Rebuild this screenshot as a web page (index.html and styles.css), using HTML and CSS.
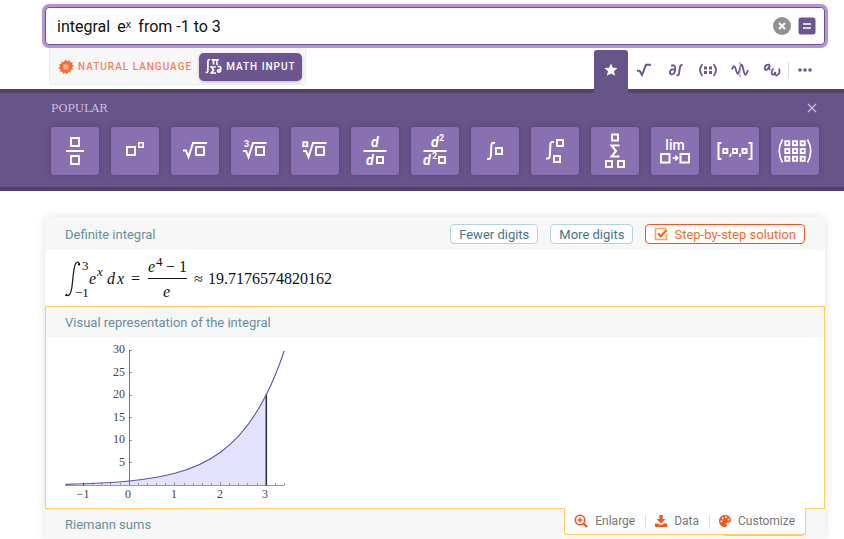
FILE: index.html
```html
<!DOCTYPE html>
<html lang="en">
<head>
<meta charset="utf-8">
<meta name="viewport" content="width=device-width, initial-scale=1">
<title>integral e^x from -1 to 3</title>
<link rel="stylesheet" href="styles.css">
</head>
<body>
<form class="query">
  <input class="query-input" type="text" aria-label="Query" value="integral&thinsp; eˣ&thinsp; from -1 to 3">
  <button class="query-btn" type="reset" aria-label="Clear">
    <svg width="18" height="18" viewBox="0 0 18 18"><circle cx="9" cy="9" r="9" fill="#919191"/><path d="M6 6l6 6M12 6l-6 6" stroke="#fff" stroke-width="2"/></svg>
  </button>
  <button class="query-btn" type="submit" aria-label="Compute">
    <svg width="18" height="18" viewBox="0 0 18 18"><rect x=".5" y=".5" width="17" height="17" rx="2.5" fill="#6b568f"/><path d="M5 7h8M5 11h8" stroke="#fff" stroke-width="1.6"/></svg>
  </button>
</form>

<div class="modes">
  <div class="toggle">
    <button class="mode natural" type="button">
      <svg width="16" height="16" viewBox="0 0 16 16"><path fill="#f96932" d="M8 .5l1.400 2.100L11.600.9l.5 2.500 2.700-.2-.7 2.400 1.900 1.400-2 1.300 1.200 2.200-2.500.4.1 2.500-2.400-.8L8.900 15.500 7.200 13.600 5.100 15l-.7-2.400-2.500.3.7-2.400L.3 9.200 2.200 7.600.9 5.500l2.500-.4-.2-2.500 2.400.7z"/><rect x="5.300" y="5.300" width="5.400" height="5.400" fill="#fba98a"/></svg>
      <span>NATURAL LANGUAGE</span>
    </button>
    <button class="mode math" type="button">
      <svg width="17" height="17" viewBox="0 0 17 17" fill="none" stroke="#fff" stroke-width="1.700"><path d="M5 1.800C3.300 1.200 2.900 2 2.900 4v8c0 2-.7 2.800-2.200 2.100M6.500 1.800h7.200M8.500 2v4.600M11.800 2v3.600q0 1 1.200.7M10.800 9H6.300l2.300 3-2.300 3h4.700M12.800 8.900q2.700-1.500 3 1.500.2 3.700-1.900 3.700-1.400 0-1.300-1.500.5-1.500 3-.9"/></svg>
      <span>MATH INPUT</span>
    </button>
  </div>
  <nav class="tabs" aria-label="Math keyboards">
    <button class="tab active" type="button" aria-label="Popular"><svg width="14" height="14" viewBox="0 0 14 14"><path fill="#fff" d="M7 .5l1.900 4.200 4.600.4-3.500 3.100 1.100 4.600L7 10.400l-4.100 2.400L4 8.200.5 5.100l4.600-.4z"/></svg></button>
    <button class="tab" type="button" aria-label="Roots"><svg width="16" height="16" viewBox="0 0 16 16"><path d="M1 8.800h2.600L6 13l4-10.200h5" stroke-width="2"/></svg></button>
    <button class="tab" type="button" aria-label="Calculus"><svg width="16" height="16" viewBox="0 0 16 16"><path d="M3.200 3.800Q7.400 2 7.300 7 6.800 12.500 3.500 12.400 1.500 12.200 2 9.500 3 6.200 7 8M14.500 3.400Q12.500 2.300 12 5l-1 6.500Q10.500 14 8.600 13" stroke-width="1.900"/></svg></button>
    <button class="tab" type="button" aria-label="Matrices"><svg width="20" height="16" viewBox="0 0 20 16"><path d="M4.400 2Q-.4 8 4.400 14M15.600 2Q20.400 8 15.600 14" stroke-width="1.800"/><path d="M6 6h3M11 6h3M6 10.500h3M11 10.500h3" stroke-width="3"/></svg></button>
    <button class="tab" type="button" aria-label="Functions"><svg width="18" height="18" viewBox="0 0 18 18"><path d="M1 8.500C3 3 4 5 5 9s2 6 3.500 0 2.200-8 3.700-1 2.400 8 4.800 1" stroke-width="1.800"/><path d="M9 1v16" stroke="#a99bc0" stroke-width="1.200" stroke-dasharray="3 1"/></svg></button>
    <button class="tab" type="button" aria-label="Greek letters"><svg width="18" height="16" viewBox="0 0 18 16"><path d="M6.800 2.800Q3 1.800 1.900 5q-.7 3 1.200 3Q5.500 7.600 6.800 2.800 5.500 7.700 7.400 7.900M10.500 6.500Q8 9.500 8.900 12q1.600 2.200 3.500-2.200-.7 4.200 1.800 3.500Q17.600 11.600 16 6.600" stroke-width="1.800"/></svg></button>
    <button class="tab more" type="button" aria-label="More"><svg width="16" height="6" viewBox="0 0 16 6"><g fill="#6b568f" stroke="none"><circle cx="3" cy="3" r="1.800"/><circle cx="8" cy="3" r="1.800"/><circle cx="13" cy="3" r="1.800"/></g></svg></button>
  </nav>
</div>

<section class="keyboard">
  <div class="keyboard-head">
    <h2>POPULAR</h2>
    <button class="close" type="button" aria-label="Close"><svg width="10" height="10" viewBox="0 0 10 10"><path d="M1 1l8 8M9 1L1 9" stroke="#cfc5df" stroke-width="1.100"/></svg></button>
  </div>
  <div class="keys">
    <button class="key" type="button" aria-label="Fraction"><svg viewBox="0 0 48 48"><path d="M20 11h8v8h-8zM20 29h8v8h-8zM15 24h18"/></svg></button>
    <button class="key" type="button" aria-label="Power"><svg viewBox="0 0 48 48"><path d="M16 20h8v8h-8z"/><path class="thin" d="M27.800 15.800h4.400v4.400h-4.400z"/></svg></button>
    <button class="key" type="button" aria-label="Square root"><svg viewBox="0 0 48 48"><path d="M12 23.500h3l2.500 6.500L22 16h14M25 20h8v8h-8z"/></svg></button>
    <button class="key" type="button" aria-label="Cube root"><svg viewBox="0 0 48 48"><path d="M12 24h3l2.500 6L22 16h13.500M25 20h8v8h-8z"/><text class="tiny" x="13" y="20">3</text></svg></button>
    <button class="key" type="button" aria-label="Nth root"><svg viewBox="0 0 48 48"><path d="M12 24h3l2.500 6L22 16h13.500M25 20h8v8h-8z"/><path d="M12.300 15.300h4v4h-4z"/></svg></button>
    <button class="key" type="button" aria-label="Derivative"><svg viewBox="0 0 48 48"><path d="M12.500 24h23M26 30h6v6h-6z"/><text class="it" x="20" y="20">d</text><text class="it" x="15" y="38">d</text></svg></button>
    <button class="key" type="button" aria-label="Second derivative"><svg viewBox="0 0 48 48"><path d="M12.500 24h23M28 30h6v6h-6z"/><text class="it" x="20" y="20">d</text><text class="tiny" x="28" y="14">2</text><text class="it" x="12" y="38">d</text><text class="tiny" x="21" y="32">2</text></svg></button>
    <button class="key" type="button" aria-label="Integral"><svg viewBox="0 0 48 48"><path d="M24 16.200q-3.500-1.400-3.600 2.300L19.800 29q-.2 4-3.800 2.800"/><path d="M25 21h6v6h-6z"/></svg></button>
    <button class="key" type="button" aria-label="Definite integral"><svg viewBox="0 0 48 48"><path d="M23 15.200q-3.500-1.400-3.600 2.300L18.800 28.500q-.2 4-3.800 2.800"/><path d="M26 13h6v6h-6zM23 29h6v6h-6z"/></svg></button>
    <button class="key" type="button" aria-label="Sum"><svg viewBox="0 0 48 48"><path d="M21 7.500h6v6h-6zM28.500 18.500H20.500l4.500 5.500-4.500 5.500h8M15 34h6v6h-6zM27 34h6v6h-6z"/></svg></button>
    <button class="key" type="button" aria-label="Limit"><svg viewBox="0 0 48 48"><text class="lim" x="24" y="23">lim</text><path d="M10 27h8.500v8.500H10zM29.500 27H38v8.500h-8.500z"/><path class="thin" d="M21.500 31h5M24.300 28.600L26.700 31l-2.400 2.400"/></svg></button>
    <button class="key" type="button" aria-label="Vector"><svg viewBox="0 0 48 48"><path d="M10.500 16H7.500v16h3M37.500 16h3v16h-3"/><path d="M12.300 22h4v4h-4zM22 22h4v4h-4zM31.500 22h4v4h-4z"/><path class="thin" d="M19.800 26.500l-.7 3.300M29.300 26.500l-.7 3.300"/></svg></button>
    <button class="key" type="button" aria-label="Matrix"><svg viewBox="0 0 48 48"><path class="thin" d="M11.500 12.500q-6.500 11.500 0 23M36.500 12.500q6.500 11.500 0 23"/><path d="M14.300 14.300h4v4h-4zM22 14.300h4v4h-4zM29.700 14.300h4v4h-4zM14.300 22h4v4h-4zM22 22h4v4h-4zM29.700 22h4v4h-4zM14.300 29.700h4v4h-4zM22 29.700h4v4h-4zM29.700 29.700h4v4h-4z"/></svg></button>
  </div>
</section>

<main class="results">
  <section class="pod">
    <header class="pod-head first">
      <h2>Definite integral</h2>
      <button class="action" type="button">Fewer digits</button>
      <button class="action" type="button">More digits</button>
      <button class="action step" type="button">
        <svg width="14" height="14" viewBox="0 0 14 14" fill="none"><path d="M12.500 7v5.500h-11v-11h11" stroke="#ffa45c" stroke-width="1.600"/><path d="M4 6.300l2.700 3L12.600 3" stroke="#f4691a" stroke-width="2.400"/></svg>
        Step-by-step solution
      </button>
    </header>
    <div class="formula">
      <svg width="280" height="46" viewBox="0 0 280 46" role="img" aria-label="Definite integral of e to the x from -1 to 3">
        <path d="M15.500 8.800Q14 5.600 11.700 8.500C9.500 12 9.300 21 8.300 29 7.500 37 5.500 42.500 2 40" fill="none" stroke="#222" stroke-width="1.300"/>
        <circle cx="15" cy="9.400" r="1.100"/><circle cx="2.300" cy="40" r="1.100"/>
        <text class="sub" x="18" y="15">3</text>
        <text class="sub" x="11" y="42">−1</text>
        <text class="var" x="25" y="29">e</text><text class="subvar" x="33" y="21">x</text>
        <text class="var" x="43" y="29">d</text><text class="var" x="53" y="29">x</text>
        <text x="67" y="29">=</text>
        <text class="var" x="84" y="17">e</text><text class="sub" x="92" y="11">4</text>
        <text x="102" y="17">−</text><text x="115" y="17">1</text>
        <path d="M84 23.500h39" stroke="#111"/>
        <text class="var" x="99" y="42">e</text>
        <text x="130" y="29">≈</text>
        <text x="144" y="29">19.7176574820162</text>
      </svg>
    </div>
  </section>

  <section class="pod selected">
    <header class="pod-head"><h2>Visual representation of the integral</h2></header>
    <div class="plot">
      <svg width="224" height="164" viewBox="0 0 224 164" role="img" aria-label="Plot of e to the x, shaded from -1 to 3">
        <path fill="#e3e3ff" d="M19.700 143.800C34.900 143.300 50.100 142.500 65.300 141 80.500 139.500 95.700 137.400 110.900 133.300 126.100 129.200 141.300 123.300 156.500 112.200 171.700 101.100 186.900 85.200 202.100 55.100V145.500H19.700z"/>
        <path stroke="#999" fill="none" d="M1 145.500h219.500M28.500 145v-2M37.500 145v-2M46.500 145v-2M56.500 145v-2M74.500 145v-2M83.500 145v-2M92.500 145v-2M101.500 145v-2M110.500 145v-3M120.500 145v-2M129.500 145v-2M138.500 145v-2M147.500 145v-2M156.500 145v-3M165.500 145v-2M174.500 145v-2M183.500 145v-2M193.500 145v-2M211.500 145v-2M220.500 145v-2M65.500 10.500h2.500M65.500 32.500h2.500M65.500 55.500h2.500M65.500 77.500h2.500M65.500 100.500h2.500M65.500 122.500h2.500"/>
        <path stroke="#777" fill="none" d="M65.500 10v135.500"/>
        <path stroke="#333" stroke-width="1.600" d="M202.300 54.500V145.500"/><path stroke="#222" d="M19.500 143v2.500"/>
        <path stroke="#5b55a8" stroke-width="1.100" fill="none" d="M1.500 144.400C22.800 143.900 44 143.100 65.300 141 80.500 139.500 95.700 137.400 110.900 133.300 126.100 129.200 141.300 123.300 156.500 112.200 171.700 101.100 186.900 85.200 202.100 55.100 208.200 43 214.200 28.700 220.300 10.700"/>
        <g class="ylabels"><text x="61" y="13">30</text><text x="61" y="36">25</text><text x="61" y="58">20</text><text x="61" y="81">15</text><text x="61" y="103">10</text><text x="61" y="126">5</text></g>
        <g class="xlabels"><text x="19" y="158">−1</text><text x="64" y="158">0</text><text x="110" y="158">1</text><text x="156" y="158">2</text><text x="201" y="158">3</text></g>
      </svg>
    </div>
    <div class="tools">
      <button type="button"><svg width="14" height="14" viewBox="0 0 14 14" fill="none" stroke="#f0561d"><circle cx="6" cy="6" r="4.700" stroke-width="1.600"/><path d="M9.500 9.500l3.500 3.500" stroke-width="2.400"/><path d="M3.500 6h5M6 3.500v5" stroke-width="1.400"/></svg>Enlarge</button>
      <button type="button"><svg width="12" height="14" viewBox="0 0 12 14" fill="#f0561d"><path d="M4.300 1h3.400v4h2.800L6 9.500 1.500 5h2.800zM0 9.500h3l1.500 1.300h3L9 9.500h3V13H0z"/></svg>Data</button>
      <button type="button"><svg width="12" height="14" viewBox="0 0 12 14"><path fill="#f0561d" d="M6 1c3.500 0 6 2.300 6 5 0 2-1.300 2.800-3.100 2.600C7.300 8.500 7 9.500 7.600 10.600 8.200 12 7.300 13 6 13 2.500 13 0 10.300 0 7s2.500-6 6-6z"/><g fill="#fff"><circle cx="2.500" cy="7.200" r="1"/><circle cx="3.700" cy="4.200" r="1"/><circle cx="7" cy="3.200" r="1"/><circle cx="9.600" cy="5.500" r="1"/></g></svg>Customize</button>
    </div>
  </section>

  <section class="pod">
    <header class="pod-head"><h2>Riemann sums</h2><span class="outline"></span></header>
  </section>
</main>
</body>
</html>
```
FILE: styles.css
```css
* { box-sizing: border-box; }

body {
  margin: 0;
  background: #fff;
  font-family: Roboto, sans-serif;
  font-size: 13px;
}

h2 { margin: 0; font-weight: 400; }

button {
  margin: 0;
  padding: 0;
  border: 0;
  background: none;
  font-family: inherit;
}

svg { display: block; flex: none; }

/* Query field */
.query {
  position: relative;
  z-index: 1;
  display: flex;
  align-items: center;
  gap: 7px;
  height: 38px;
  margin: 7px 19px 0 45px;
  padding: 0 8px 0 11px;
  border: 1px solid #6b568f;
  border-radius: 4px;
  background: #fff;
  box-shadow: 0 0 0 3px #b794d8;
}

.query-input {
  flex: 1;
  min-width: 0;
  padding: 0;
  border: 0;
  outline: 0;
  background: none;
  color: #111;
  font: 16px Roboto, sans-serif;
}

/* Input modes and keyboard tabs */
.modes {
  display: flex;
  justify-content: space-between;
  align-items: flex-start;
  height: 44px;
  padding: 0 24px 0 49px;
}

.toggle {
  display: flex;
  align-items: center;
  height: 40px;
  padding: 4px 3px 0 8px;
  border: 1px solid #ececec;
  border-top: 0;
  border-radius: 0 0 4px 4px;
  background: #f7f7f7;
}

.mode {
  display: flex;
  align-items: center;
  gap: 4px;
  height: 28px;
  font-size: 10px;
  font-weight: 500;
  letter-spacing: 1px;
  white-space: nowrap;
}

.natural { color: #f58160; }

.math {
  margin-left: 7px;
  padding: 0 6px;
  border-radius: 5px;
  background: #6b568f;
  box-shadow: 0 1px 3px rgba(0, 0, 0, 0.25);
  color: #fff;
}

.tabs {
  display: flex;
  padding-top: 5px;
}

.tab {
  display: flex;
  align-items: center;
  justify-content: center;
  width: 32px;
  height: 39px;
}

.tab svg { fill: none; stroke: #6b568f; }

.tab.active {
  position: relative;
  width: 34px;
  height: 43px;
  padding-bottom: 4px;
  border-radius: 3px 3px 0 0;
  background: #675489;
}

.tab.active svg { stroke: none; }

.more {
  border-left: 1px solid #ddd;
  height: 16px;
  margin-top: 12px;
}

/* Keyboard */
.keyboard {
  border-top: 4px solid #54416f;
  border-bottom: 4px solid #54416f;
  padding: 8px 25px 12px 51px;
  background: #675489;
}

.keyboard-head {
  display: flex;
  justify-content: space-between;
  align-items: center;
  height: 14px;
  margin-bottom: 12px;
}

.keyboard-head h2 {
  color: #d0c2e6;
  font: 11px "DejaVu Serif", serif;
}

.close { padding: 2px; }

.keys {
  display: flex;
  justify-content: space-between;
}

.key {
  width: 48px;
  height: 48px;
  border-radius: 3px;
  background: #8870b1;
  box-shadow: 0 0 5px rgba(60, 40, 90, 0.4);
}

.key svg {
  fill: none;
  stroke: #fff;
  stroke-width: 2;
}

.key .thin { stroke-width: 1.6; }

.key text {
  fill: #fff;
  stroke: none;
  font-weight: 700;
}

.key .tiny { font-size: 9px; }
.key .it { font-size: 14px; font-style: italic; }
.key .lim { font-size: 14px; font-weight: 500; text-anchor: middle; }

/* Results */
.results {
  margin: 26px 19px 0 45px;
  border-radius: 5px 5px 0 0;
  background: #f7f7f7;
  box-shadow: 0 0 10px rgba(0, 0, 0, 0.13);
}

.pod-head {
  display: flex;
  align-items: center;
  gap: 12px;
  height: 30px;
  padding: 0 20px;
  background: #f7f7f7;
}

.pod-head.first {
  height: 33px;
  padding-top: 1px;
  border-radius: 5px 5px 0 0;
}

.pod-head h2 {
  flex: 1;
  color: #688fa0;
  font-size: 13px;
}

.action {
  display: flex;
  align-items: center;
  gap: 6px;
  height: 20px;
  padding: 0 8px;
  border: 1px solid #b3d3dc;
  border-radius: 4px;
  background: #fff;
  color: #45748a;
  font-size: 13px;
  white-space: nowrap;
}

.step {
  border-color: #f0561d;
  color: #f96a2b;
}

.formula {
  height: 56px;
  padding: 5px 19px;
  border-radius: 5px 5px 0 0;
  background: #fff;
}

.formula text {
  fill: #111;
  font: 16px "Liberation Serif", serif;
}

.formula .var { font-style: italic; }
.formula .sub { font-size: 13px; }
.formula .subvar { font-size: 13px; font-style: italic; }

.selected {
  position: relative;
  border: 1px solid #fc6;
}

.selected .pod-head { padding: 0 19px; }

.plot {
  height: 171px;
  padding: 3px 18px;
  background: #fff;
}

.plot text {
  fill: #444;
  font: 12px "Liberation Serif", serif;
}

.ylabels { text-anchor: end; }
.xlabels { text-anchor: middle; }

.tools {
  position: absolute;
  top: 100%;
  right: 18px;
  display: flex;
  align-items: center;
  height: 27px;
  border: 1px solid #fc6;
  border-top: 0;
  border-radius: 0 0 3px 3px;
  background: #fff;
}

.tools button {
  display: flex;
  align-items: center;
  gap: 7px;
  height: 12px;
  padding: 0 10px 0 9px;
  border-left: 1px solid #ddd;
  color: #777;
  font-size: 12px;
}

.tools button:first-child { border-left: 0; }

.outline {
  width: 84px;
  height: 20px;
  margin-top: 4px;
  border: 1px solid #b3d3dc;
  border-radius: 4px;
}
```
